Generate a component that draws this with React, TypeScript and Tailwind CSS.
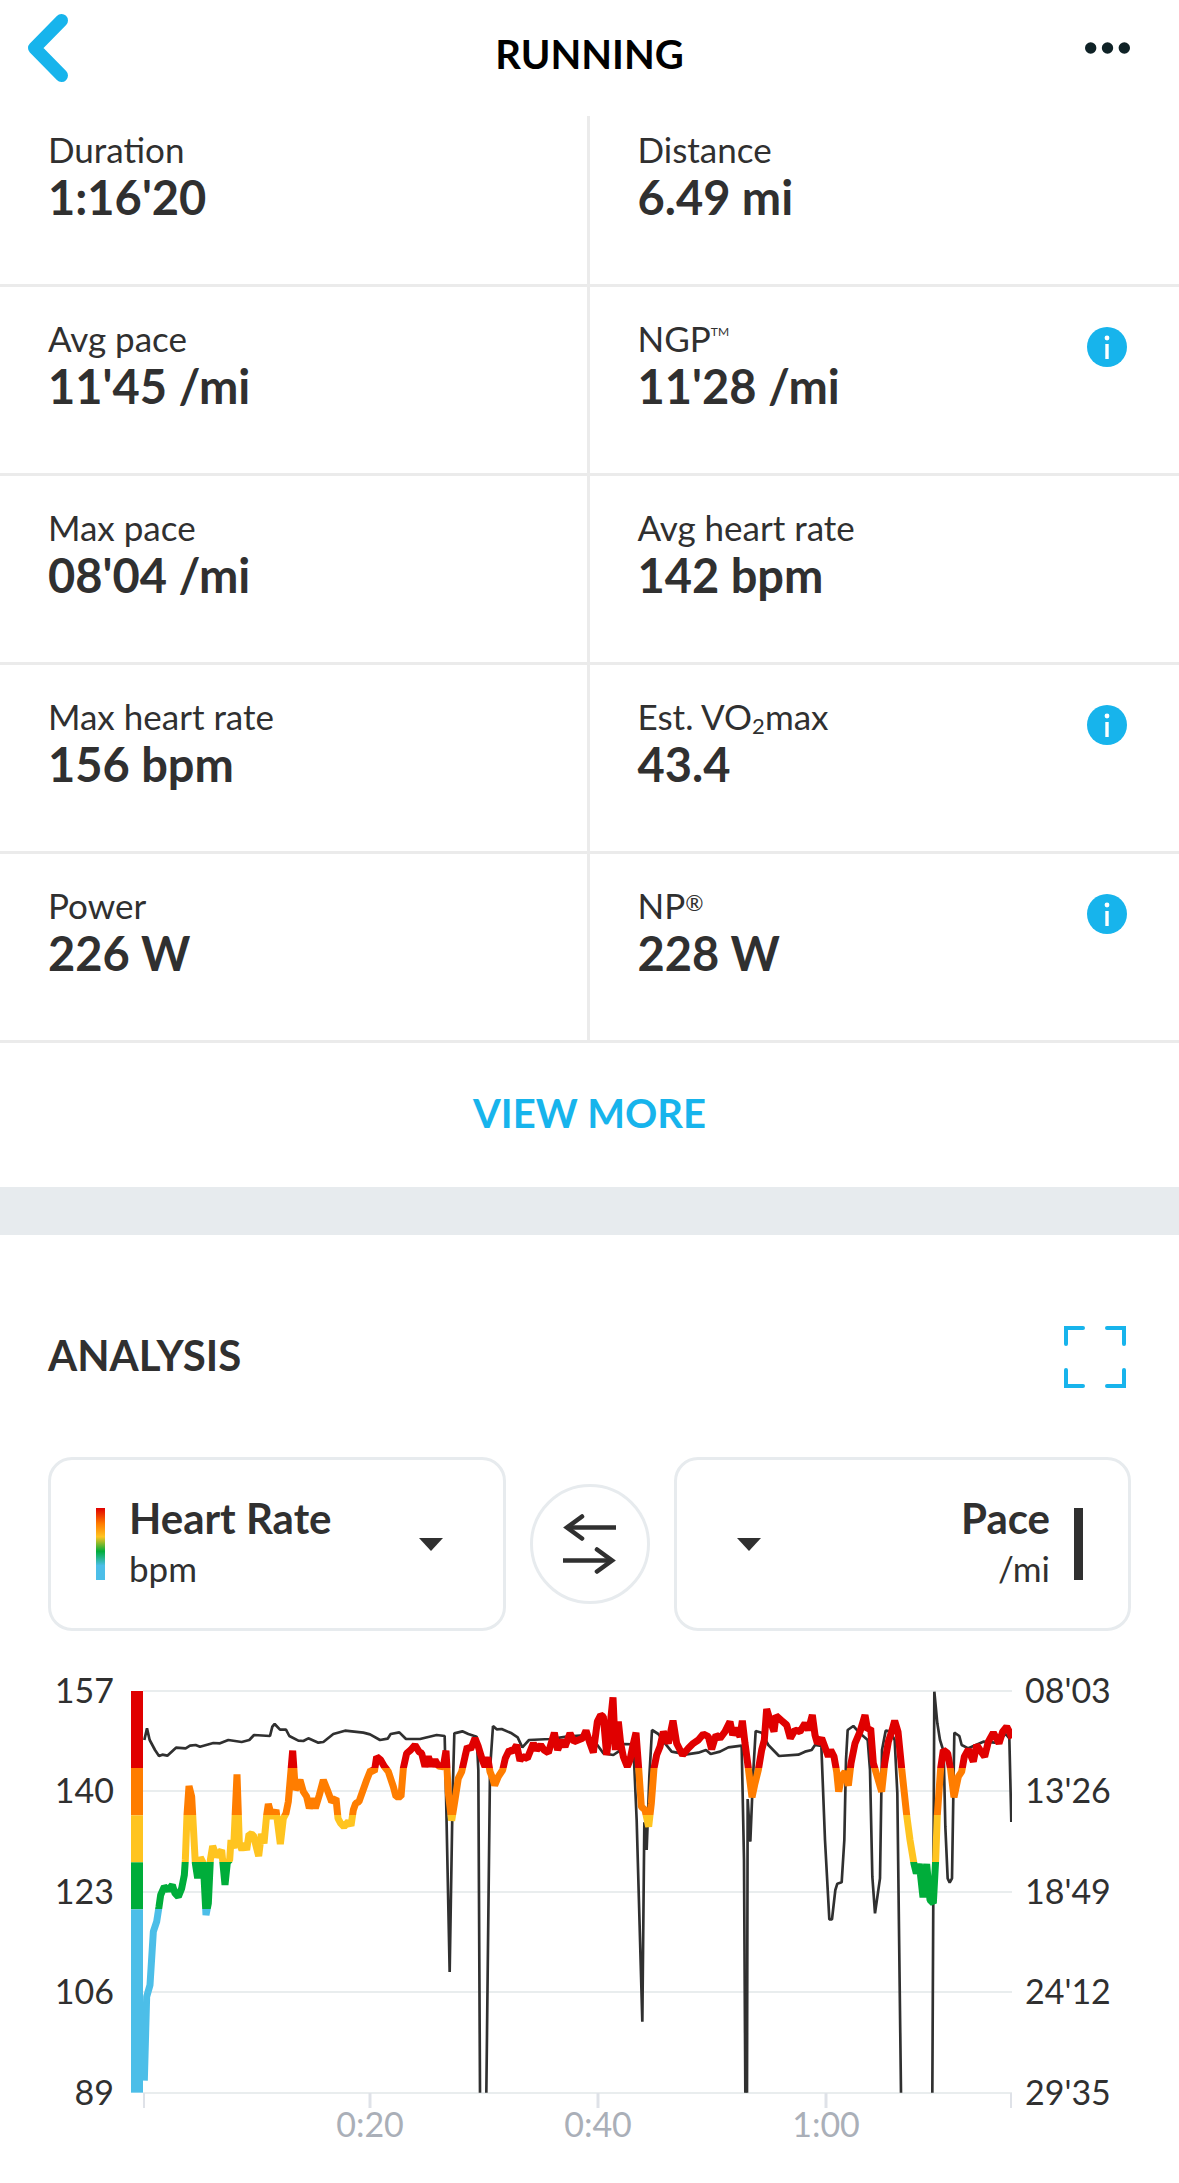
import React, { useState } from 'react';
import clsx from 'clsx';

interface Metric {
  id: string;
  label: React.ReactNode;
  value: string;
  hasInfo?: boolean;
}

const METRICS: Metric[] = [
  { id: 'duration', label: 'Duration', value: "1:16'20" },
  { id: 'distance', label: 'Distance', value: '6.49 mi' },
  { id: 'avg-pace', label: 'Avg pace', value: "11'45 /mi" },
  {
    id: 'ngp',
    label: (
      <>
        NGP<sup className="relative -top-4 align-baseline text-[12px] leading-none">TM</sup>
      </>
    ),
    value: "11'28 /mi",
    hasInfo: true,
  },
  { id: 'max-pace', label: 'Max pace', value: "08'04 /mi" },
  { id: 'avg-hr', label: 'Avg heart rate', value: '142 bpm' },
  { id: 'max-hr', label: 'Max heart rate', value: '156 bpm' },
  {
    id: 'vo2max',
    label: (
      <>
        Est. VO<sub className="relative top-1 align-baseline text-[22px] leading-none">2</sub>max
      </>
    ),
    value: '43.4',
    hasInfo: true,
  },
  { id: 'power', label: 'Power', value: '226 W' },
  {
    id: 'np',
    label: (
      <>
        NP<sup className="relative -top-2 align-baseline text-[22px] leading-none">®</sup>
      </>
    ),
    value: '228 W',
    hasInfo: true,
  },
];

const SERIES = ['Heart Rate', 'Pace', 'Power', 'Cadence', 'Altitude'];

// Plot units: y 93 is the top grid line, y 1298 the bottom one
const PLOT_TOP = 93;
const PLOT_BOTTOM = 1298;

const ZONES = [
  { color: '#e00000', from: 93, to: 324 },
  { color: '#ff7d00', from: 324, to: 466 },
  { color: '#ffc420', from: 466, to: 607 },
  { color: '#00ad3a', from: 607, to: 748 },
  { color: '#4cbee8', from: 748, to: 1298 },
];

const HEART_RATE = `
  40,1262 47,1010 57,975 67,815 77,785 84,740 89,705 100,680 112,690 124,675 132,700 142,710 152,685
  160,645 163,600 168,465 174,378 182,410 187,500 193,610 200,655 208,592 217,610 225,765 232,730
  238,600 245,558 257,590 272,570 282,675 289,607 296,600 300,540 308,565 318,343 325,550 333,570
  340,550 347,570 354,522 367,525 377,565 383,588 391,522 399,550 407,465 412,432 424,475 435,450
  448,552 457,475 465,460 472,425 485,272 493,390 507,360 517,395 527,410 535,445 545,415 553,445
  565,405 577,360 589,390 602,425 615,415 621,475 629,490 639,500 652,485 660,497 667,450 674,430
  684,425 707,360 719,330 730,335 737,290 749,300 759,318 772,335 787,380 795,410 810,410 817,325
  827,280 839,270 852,255 864,275 872,280 882,320 892,290 902,318 912,300 922,318 937,320 945,272
  952,400 962,482 972,420 982,355 992,335 1002,290 1009,260 1019,268 1032,235 1042,260 1054,300
  1062,320 1070,292 1077,335 1085,355 1091,376 1102,350 1115,330 1123,295 1135,270 1145,275 1157,255
  1167,302 1175,290 1189,295 1207,250 1217,270 1229,255 1239,270 1252,278 1270,218 1280,270 1292,240
  1302,260 1317,220 1329,245 1342,240 1355,235 1365,212 1377,250 1387,278 1399,185 1409,165 1417,170
  1427,285 1437,200 1446,112 1453,270 1462,185 1469,250 1477,290 1489,320 1497,300 1505,260 1515,218
  1523,325 1531,440 1542,450 1553,500 1561,430 1569,325 1577,285 1587,260 1597,215 1612,250 1626,182
  1637,250 1647,270 1655,285 1672,265 1687,250 1702,240 1717,222 1732,230 1742,268 1755,225 1767,235
  1782,215 1797,185 1805,225 1815,205 1827,230 1834,182 1842,250 1852,325 1863,412 1872,370 1882,330
  1892,270 1900,240 1907,147 1917,180 1929,215 1935,167 1952,182 1967,195 1978,235 1992,210 2007,215
  2022,190 2032,210 2044,165 2052,225 2059,250 2072,235 2085,270 2092,290 2099,270 2109,290 2117,335
  2123,395 2132,350 2142,335 2152,377 2160,310 2172,250 2187,215 2202,165 2210,210 2219,205 2227,310
  2239,350 2252,395 2261,310 2272,245 2282,215 2291,182 2301,215 2312,325 2327,465 2337,540 2349,612
  2356,640 2365,612 2376,712 2387,612 2397,720 2407,730 2414,600 2419,465 2429,325 2437,270 2450,280
  2459,330 2469,412 2482,350 2492,335 2500,290 2512,268 2527,305 2537,255 2547,270 2561,290 2572,245
  2587,218 2604,250 2615,215 2627,200 2635,215 2643,235`;

const PACE_RUNS = [
  `40,240 48,205 56,240 72,270 84,288 94,284 109,287 135,263 164,265 177,257 194,255 207,260 247,249
  267,250 292,240 332,246 355,240 369,225 417,228 424,200 431,192 447,209 465,209 475,228 502,242
  517,243 532,235 562,248 577,246 607,222 642,212 697,218 717,223 747,240 770,236 779,222 805,217
  825,237 867,237 917,225 941,228 945,400 956,936 965,400 970,220 994,214 1012,222 1037,230 1042,330
  1047,1298`,
  `1066,1298 1077,330 1086,198 1097,208 1112,207 1142,220 1160,232 1174,262 1194,240 1257,237
  1307,230 1367,225 1392,245 1417,280 1447,285 1462,275 1477,252 1507,253 1517,480 1534,1085
  1540,487 1547,570 1555,350 1563,210 1582,222 1602,250 1622,275 1667,283 1702,278 1725,270 1739,282
  1767,275 1792,262 1832,257 1839,600 1843,1298`,
  `1848,1298 1850,417 1858,545 1866,350 1874,213 1892,218 1912,255 1944,288 2002,284 2022,275
  2042,270 2052,255 2071,258 2082,540 2095,778 2103,778 2113,690 2119,671 2132,667 2140,540 2145,300
  2150,210 2167,198 2187,220 2210,240 2217,330 2224,650 2232,760 2247,655 2253,270 2264,212 2277,214
  2291,240 2299,400 2310,1298`,
  `2404,1298 2410,95 2419,190 2427,240 2438,275 2443,500 2450,655 2456,668 2463,655 2470,218
  2485,228 2492,255 2512,265 2557,245 2592,248 2607,238 2624,222 2635,235 2641,486`,
];

const GRID_ROWS = [
  { y: 40, hr: '157', pace: "08'03" },
  { y: 140, hr: '140', pace: "13'26" },
  { y: 241, hr: '123', pace: "18'49" },
  { y: 341, hr: '106', pace: "24'12" },
  { y: 442, hr: '89', pace: "29'35" },
];

const TIME_TICKS = [
  { x: 144, label: '' },
  { x: 370, label: '0:20' },
  { x: 598, label: '0:40' },
  { x: 826, label: '1:00' },
  { x: 1011, label: '' },
];

const InfoIcon = () => (
  <svg viewBox="0 0 40 40" className="size-10" aria-hidden="true">
    <circle cx="20" cy="20" r="20" fill="#17b4ec" />
    <circle cx="20" cy="11" r="2.4" fill="#fff" />
    <rect x="18.3" y="17" width="3.4" height="15" fill="#fff" />
  </svg>
);

const Caret = () => (
  <svg viewBox="0 0 24 13" className="h-[13px] w-6 shrink-0" aria-hidden="true">
    <path d="M0 0h24L12 13z" fill="#303030" />
  </svg>
);

const MetricCell = ({ metric, index }: { metric: Metric; index: number }) => (
  <div
    className={clsx(
      'flex items-start justify-between border-b-[3px] border-[#ebebeb] pl-12 pr-[52px]',
      index % 2 === 0 && 'border-r-[3px]',
      index < 2 ? 'min-h-[171px] pt-2.5' : 'min-h-[189px] pt-7',
    )}
  >
    <dl>
      <dt className="text-[35px] leading-[46px]">{metric.label}</dt>
      <dd className="text-[47px] font-bold leading-[50px]">{metric.value}</dd>
    </dl>
    {metric.hasInfo && (
      <button type="button" aria-label="More information" className="mt-3">
        <InfoIcon />
      </button>
    )}
  </div>
);

interface SeriesPickerProps {
  label: string;
  value: string;
  unit: string;
  align: 'left' | 'right';
  onChange: (value: string) => void;
}

const SeriesPicker = ({ label, value, unit, align, onChange }: SeriesPickerProps) => {
  const isRight = align === 'right';

  return (
    <label
      className={clsx(
        'flex h-[174px] min-w-0 flex-1 items-center rounded-3xl border-[3px] border-[#e7ebee]',
        isRight ? 'flex-row-reverse pl-[60px] pr-[45px]' : 'pl-[45px] pr-[60px]',
      )}
    >
      <span
        className={clsx(
          'h-[72px] w-[9px] shrink-0',
          isRight
            ? 'bg-[#303030]'
            : 'bg-[linear-gradient(to_bottom,#e00000,#ff7d00_22%,#ffc420_40%,#00ad3a_60%,#4cbee8_80%)]',
        )}
      />
      <span className={clsx('flex min-w-0 flex-1 flex-col', isRight ? 'mr-6 text-right' : 'ml-6')}>
        <select
          aria-label={label}
          value={value}
          onChange={(e) => onChange(e.target.value)}
          className={clsx(
            'h-12 w-full appearance-none bg-transparent text-[42px] font-bold leading-[48px] outline-none',
            isRight && '[text-align-last:right]',
          )}
        >
          {SERIES.map((name) => (
            <option key={name}>{name}</option>
          ))}
        </select>
        <span className="text-[35px] leading-[52px]">{unit}</span>
      </span>
      <Caret />
    </label>
  );
};

const AnalysisChart = () => (
  <svg viewBox="0 0 1179 532" className="mt-5 block w-full" role="img" aria-label="Heart rate and pace over time">
    <defs>
      <linearGradient id="zones" gradientUnits="userSpaceOnUse" x1="0" x2="0" y1={PLOT_TOP} y2={PLOT_BOTTOM}>
        {ZONES.flatMap(({ color, from, to }) =>
          [from, to].map((y) => (
            <stop
              key={`${color}-${y}`}
              offset={(y - PLOT_TOP) / (PLOT_BOTTOM - PLOT_TOP)}
              stopColor={color}
            />
          )),
        )}
      </linearGradient>
    </defs>

    {GRID_ROWS.map(({ y, hr, pace }) => (
      <g key={hr} fontSize="34" fill="#303030">
        <path d={`M143 ${y}H1012`} stroke="#e9edee" strokeWidth="2" />
        <text x="114" y={y + 12} textAnchor="end">
          {hr}
        </text>
        <text x="1025" y={y + 12}>
          {pace}
        </text>
      </g>
    ))}

    {TIME_TICKS.map(({ x, label }) => (
      <g key={x} fontSize="34" fill="#aaafb8">
        <path d={`M${x} 442v15`} stroke="#dfe2e8" strokeWidth={label ? 3 : 2} />
        <text x={x} y="486" textAnchor="middle">
          {label}
        </text>
      </g>
    ))}

    <svg x="131" y="20" width="881" height="442" viewBox="0 33 2643 1326" fill="none">
      {PACE_RUNS.map((points) => (
        <polyline key={points} points={points} stroke="#303030" strokeWidth="8" strokeLinejoin="bevel" />
      ))}
      {ZONES.map(({ color, from, to }) => (
        <rect key={color} x="0" y={from} width="36" height={to - from} fill={color} />
      ))}
      <polyline points={HEART_RATE} stroke="url(#zones)" strokeWidth="21" strokeLinejoin="bevel" />
    </svg>
  </svg>
);

export default function App() {
  const [left, setLeft] = useState('Heart Rate');
  const [right, setRight] = useState('Pace');

  const swap = () => {
    setLeft(right);
    setRight(left);
  };

  return (
    <main className="min-h-screen bg-white font-[Lato,sans-serif] text-[#303030]">
      <header className="mb-5 flex h-24 items-center justify-between pl-7 pr-12">
        <button type="button" aria-label="Back" className="w-[66px]">
          <svg viewBox="0 0 40 68" className="h-[68px] w-10" fill="none" aria-hidden="true">
            <path
              d="M33.5 6.5 6.5 34l27 27.5"
              stroke="#17b4ec"
              strokeWidth="13"
              strokeLinecap="round"
              strokeLinejoin="round"
            />
          </svg>
        </button>
        <h1 className="pt-3 text-[40px] font-bold leading-[48px] text-black">RUNNING</h1>
        <button type="button" aria-label="More options">
          <svg viewBox="0 0 46 12" className="h-3 w-[46px]" fill="#0f2226" aria-hidden="true">
            <circle cx="5.7" cy="6" r="5.7" />
            <circle cx="22.5" cy="6" r="5.7" />
            <circle cx="39.3" cy="6" r="5.7" />
          </svg>
        </button>
      </header>

      <section className="grid grid-cols-2">
        {METRICS.map((metric, index) => (
          <MetricCell key={metric.id} metric={metric} index={index} />
        ))}
      </section>

      <button type="button" className="h-36 w-full pb-1 text-[40px] font-bold text-[#17b4ec]">
        VIEW MORE
      </button>

      <section className="border-t-[48px] border-[#e7ebee]">
        <div className="flex items-center justify-between pl-12 pr-[52px] pt-[90px]">
          <h2 className="pb-1 text-[42px] font-bold leading-[48px]">ANALYSIS</h2>
          <button type="button" aria-label="Full screen">
            <svg viewBox="0 0 64 64" className="size-16" fill="none" aria-hidden="true">
              <path
                d="M20 3H3v16M44 3h17v16M3 45v16h17M61 45v16H44"
                stroke="#17b4ec"
                strokeWidth="4"
                strokeLinecap="round"
              />
            </svg>
          </button>
        </div>

        <div className="flex items-center gap-6 px-12 pt-[68px]">
          <SeriesPicker label="Left axis" value={left} unit="bpm" align="left" onChange={setLeft} />
          <button
            type="button"
            aria-label="Swap axes"
            onClick={swap}
            className="flex size-[120px] shrink-0 items-center justify-center rounded-full border-[3px] border-[#e7ebee]"
          >
            <svg viewBox="0 0 54 60" className="h-[60px] w-[54px]" fill="none" aria-hidden="true">
              <g stroke="#303030" strokeWidth="4.6">
                <path d="M53 13.500H4M0 46.500h49" />
                <path d="M19 2.500 4 13.500l15 11M34 35.500l15 11-15 11" strokeLinecap="round" />
              </g>
            </svg>
          </button>
          <SeriesPicker label="Right axis" value={right} unit="/mi" align="right" onChange={setRight} />
        </div>

        <AnalysisChart />
      </section>
    </main>
  );
}
